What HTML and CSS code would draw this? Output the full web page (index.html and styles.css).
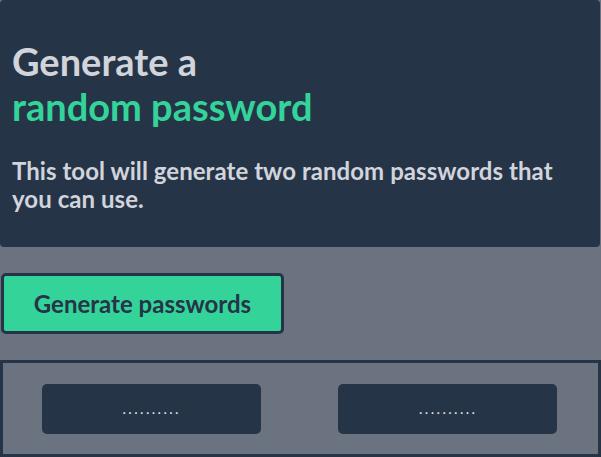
FILE: index.html
```html
<!DOCTYPE html>
<html>
<head>
<meta charset="utf-8">
<link rel="stylesheet" href="styles.css">
</head>
<body>
<main class="page">
  <section class="intro">
    <h1 class="title">Generate a<br><span class="accent">random password</span></h1>
    <p class="lead">This tool will generate two random passwords that you can use.</p>
  </section>
  <button class="generate" type="button">Generate passwords</button>
  <section class="results">
    <div class="pw"><span class="dots">..........</span></div>
    <div class="pw"><span class="dots">..........</span></div>
  </section>
</main>
</body>
</html>
```
FILE: styles.css
```css
html, body {
  margin: 0;
  padding: 0;
  background: #6b7280;
}
.page {
  display: flex;
  flex-direction: column;
  align-items: flex-start;
  gap: 26px;
  font-family: Lato, "Noto Sans", sans-serif;
}
.intro {
  box-sizing: border-box;
  width: 600px;
  background: #263448;
  border-radius: 4px;
  padding: 39px 12px 34px;
}
.title {
  margin: 0 0 28px;
  font-size: 38px;
  line-height: 45px;
  font-weight: 700;
  color: #d1d5db;
}
.accent {
  color: #34d399;
}
.lead {
  margin: 0;
  font-size: 24px;
  line-height: 28px;
  font-weight: 700;
  letter-spacing: 0.05px;
  color: #d1d5db;
}
.generate {
  box-sizing: border-box;
  margin-left: 1px;
  width: 283px;
  height: 61px;
  background: #34d399;
  border: 3px solid #263448;
  border-radius: 5px;
  color: #263448;
  font-family: Lato, "Noto Sans", sans-serif;
  font-size: 24px;
  font-weight: 700;
  padding: 0;
}
.results {
  box-sizing: border-box;
  width: 601px;
  height: 97px;
  border: 3px solid #263448;
  padding-right: 2px;
  display: flex;
  justify-content: space-around;
  align-items: center;
}
.pw {
  width: 219px;
  height: 50px;
  background: #263448;
  border-radius: 5px;
  display: flex;
  align-items: center;
  justify-content: center;
}
.dots {
  font-family: "Liberation Sans", sans-serif;
  font-size: 16px;
  line-height: 20px;
  letter-spacing: 1.4px;
  color: #e5e7eb;
}
```
